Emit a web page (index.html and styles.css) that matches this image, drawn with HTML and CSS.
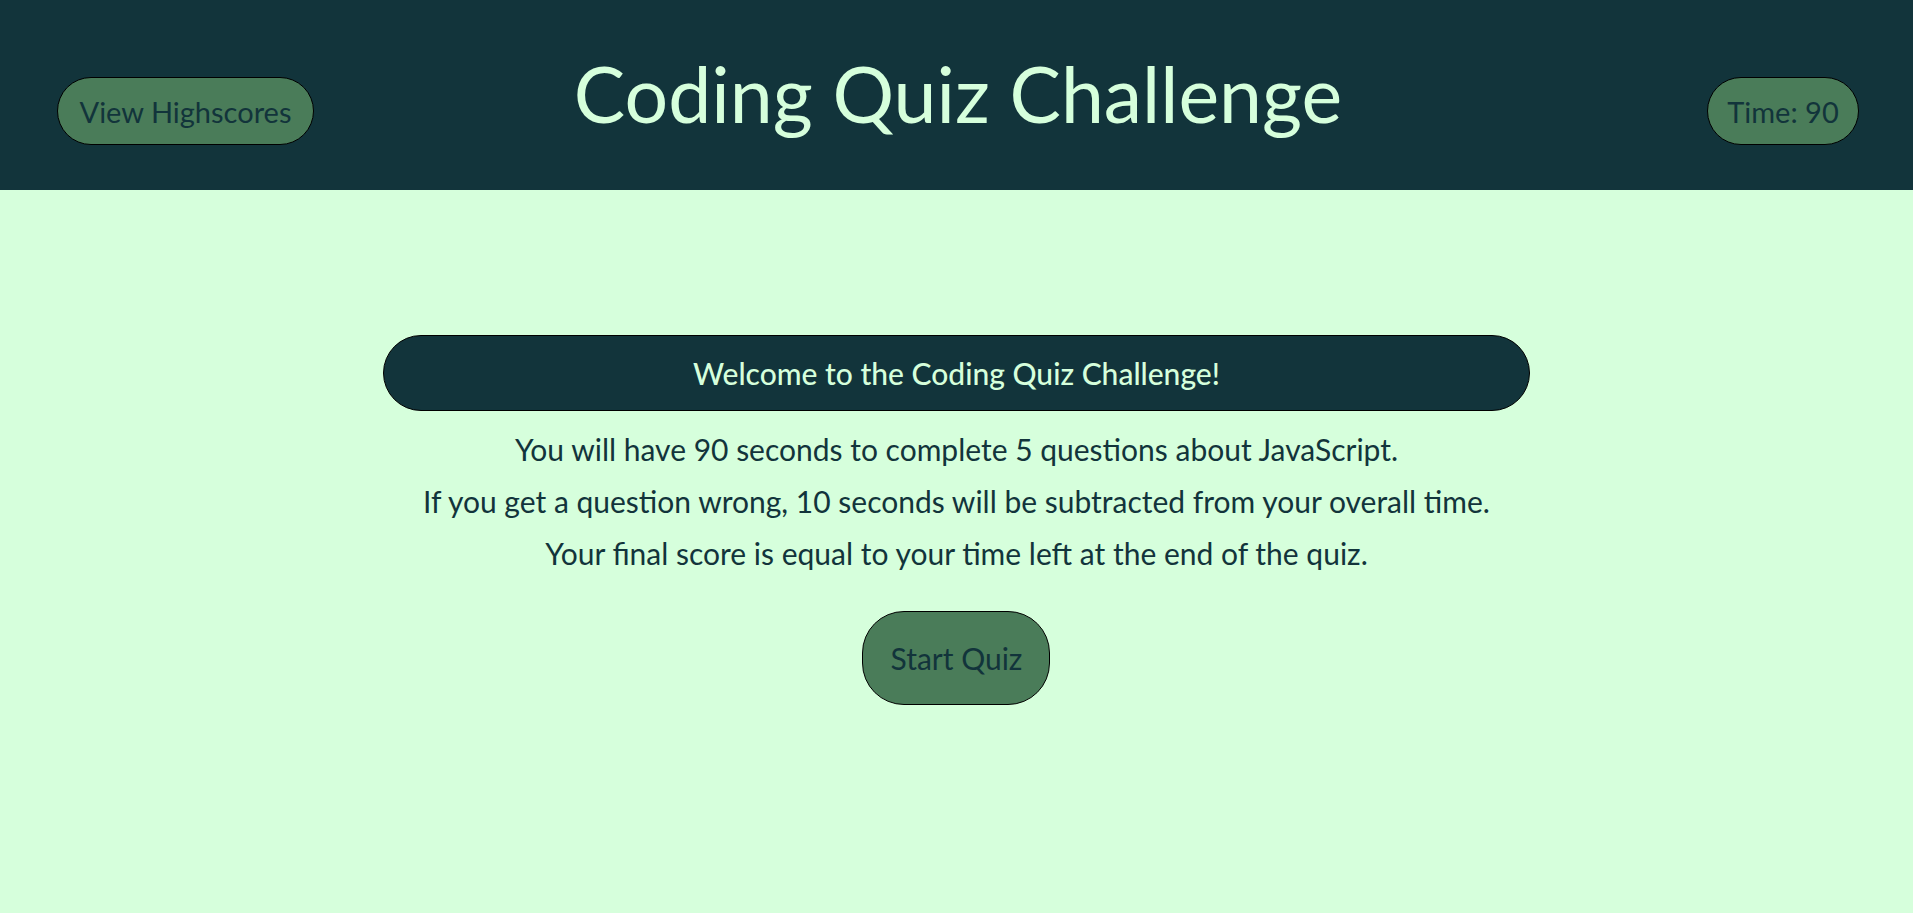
FILE: index.html
```html
<!DOCTYPE html>
<html lang="en">
<head>
<meta charset="utf-8">
<title>Coding Quiz Challenge</title>
<link rel="stylesheet" href="styles.css">
</head>
<body>
<header class="top">
  <div class="top-left"><button class="pill pill-small pill-hs">View Highscores</button></div>
  <h1 class="title">Coding Quiz Challenge</h1>
  <div class="top-right"><div class="pill pill-small pill-time">Time: 90</div></div>
</header>
<main class="main">
  <section class="intro">
    <h2 class="banner">Welcome to the Coding Quiz Challenge!</h2>
    <p class="line">You will have 90 seconds to complete 5 questions about JavaScript.</p>
    <p class="line">If you get a question wrong, 10 seconds will be subtracted from your overall time.</p>
    <p class="line">Your final score is equal to your time left at the end of the quiz.</p>
    <button class="pill pill-start">Start Quiz</button>
  </section>
</main>
</body>
</html>
```
FILE: styles.css
```css
* { box-sizing: border-box; }
html, body { margin: 0; padding: 0; }
body {
  background: #d6ffdc;
  color: #12343b;
  font-family: "Lato", "Noto Sans", sans-serif;
  min-height: 913px;
}
.top {
  background: #12343b;
  height: 190px;
  display: grid;
  grid-template-columns: 1fr auto 1fr;
  align-items: center;
  padding: 0 54px 0 57px;
}
.top-left { display: flex; justify-content: flex-start; padding-top: 32px; }
.top-right { display: flex; justify-content: flex-end; padding-top: 32px; }
.title {
  margin: 0;
  color: #d6ffdc;
  font-size: 77px;
  font-weight: 400;
  text-align: center;
  padding-bottom: 4px;
}
.pill {
  background: #4a7c59;
  color: #12343b;
  border: 1px solid #000;
  border-radius: 40px;
  font-family: inherit;
  font-weight: 400;
  display: inline-flex;
  align-items: center;
  justify-content: center;
}
.pill-small {
  height: 68px;
  font-size: 29px;
}
.pill-hs { width: 257px; }
.pill-time { width: 152px; }
.main {
  display: flex;
  justify-content: center;
  padding-top: 145px;
}
.intro {
  width: 60%;
  display: flex;
  flex-direction: column;
  align-items: center;
}
.banner {
  margin: 0 0 12px;
  width: 100%;
  height: 76px;
  background: #12343b;
  color: #d6ffdc;
  border: 1px solid #000;
  border-radius: 40px;
  font-size: 30px;
  font-weight: 500;
  display: flex;
  align-items: center;
  justify-content: center;
}
.line {
  margin: 0;
  font-size: 30px;
  line-height: 52px;
  text-align: center;
}
.pill-start {
  margin-top: 32px;
  width: 188px;
  height: 94px;
  font-size: 30px;
  border-radius: 42px;
}
```
